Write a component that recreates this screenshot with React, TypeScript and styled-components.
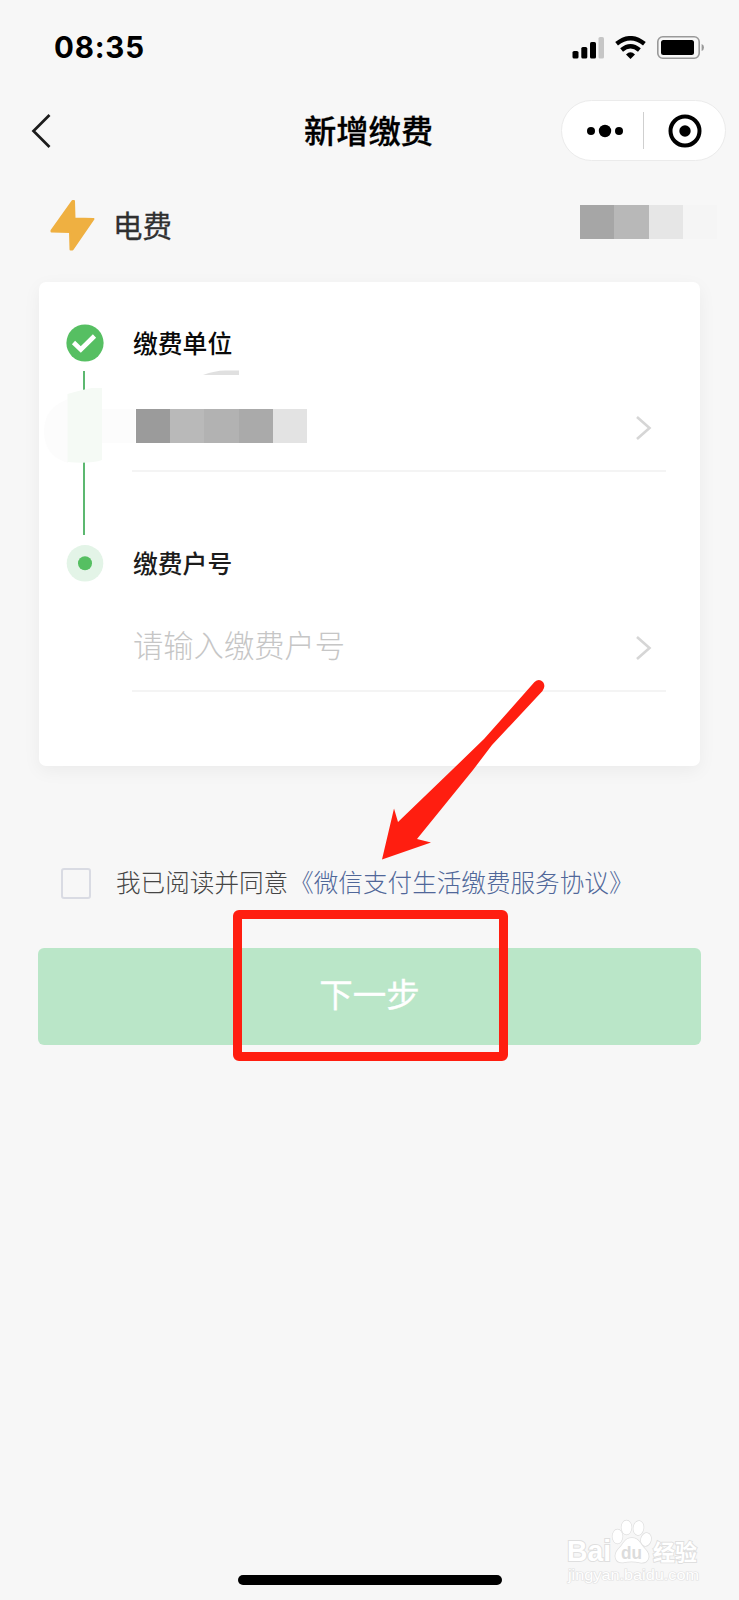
import React from 'react';
import styled, { createGlobalStyle } from 'styled-components';

const GlobalStyle = createGlobalStyle`
  * { box-sizing: border-box; }
  body { margin: 0; background: #f7f7f7; }
`;

const Screen = styled.main`
  position: relative;
  display: flex;
  flex-direction: column;
  width: 739px;
  height: 1600px;
  overflow: hidden;
  background: #f7f7f7;
  font-family: "Noto Sans CJK SC", "Noto Sans", sans-serif;
  color: #000;
`;

const StatusBar = styled.header`
  display: flex;
  align-items: center;
  justify-content: space-between;
  height: 94px;
  padding: 0 34px 0 53px;
`;

const Time = styled.span`
  font: 700 29.5px/40px Inter, sans-serif;
  letter-spacing: 0.8px;
  padding-left: 1px;
`;

const StatusIcons = styled.div`
  display: flex;
  align-items: center;
  gap: 11px;
`;

const NavBar = styled.nav`
  display: grid;
  grid-template-columns: 178px 1fr 178px;
  align-items: center;
  height: 73px;
  padding: 0 13px 0 12px;
`;

const BackButton = styled.button`
  display: flex;
  width: 60px;
  padding: 0 0 0 19px;
  border: 0;
  background: none;
`;

const PageTitle = styled.h1`
  margin: 0 1px 3px 0;
  text-align: center;
  font-size: 32.3px;
  line-height: 44px;
  font-weight: 500;
  -webkit-text-stroke: 0.3px #000;
`;

const Capsule = styled.div`
  display: flex;
  align-items: center;
  justify-self: end;
  width: 165px;
  height: 61px;
  border: 1px solid #ebebeb;
  border-radius: 31px;
  background: #fff;
`;

const CapsuleHalf = styled.span<{ $width: number; $inset: number }>`
  display: flex;
  width: ${({ $width }) => $width}px;
  padding-left: ${({ $inset }) => $inset}px;
`;

const CapsuleDivider = styled.span`
  width: 1px;
  height: 37px;
  background: #cfcfcf;
`;

const BillHeader = styled.section`
  display: flex;
  align-items: center;
  height: 115px;
  padding: 0 22px 0 50px;
`;

const BillName = styled.h2`
  flex: 1;
  margin: 0 0 2px 17px;
  color: #303030;
  font-size: 29.5px;
  line-height: 40px;
  font-weight: 400;
  -webkit-text-stroke: 0.3px #303030;
`;

const Mosaic = styled.div<{ $lift?: number; $inset?: number }>`
  display: flex;
  padding-left: ${({ $inset = 0 }) => $inset}px;
  margin-bottom: ${({ $lift = 0 }) => $lift}px;
`;

const Cell = styled.i<{ $tone: string }>`
  width: 34.2px;
  height: 34px;
  background: ${({ $tone }) => $tone};
`;

const Card = styled.section`
  position: relative;
  display: flex;
  flex-direction: column;
  height: 484px;
  margin: 0 39px;
  padding: 41px 34px 0 26px;
  border-radius: 7px;
  background: #fff;
  box-shadow: 0 5px 18px rgba(0, 0, 0, 0.05);
`;

const Step = styled.div`
  display: grid;
  grid-template-columns: 67px 1fr;
  height: 220px;
`;

const StepRail = styled.div`
  display: flex;
  flex-direction: column;
  align-items: flex-start;
  padding-top: 1px;
`;

const StepLine = styled.span`
  width: 2px;
  height: 164px;
  margin: 9px 0 0 18px;
  background: #5cb870;
`;

const StepBody = styled.div`
  display: flex;
  flex-direction: column;
`;

const StepTitle = styled.h3<{ $tone: string }>`
  margin: -1px 0 1px;
  padding-left: 1px;
  color: ${({ $tone }) => $tone};
  font-size: 24.8px;
  line-height: 40px;
  font-weight: 500;
`;

const Field = styled.div`
  display: flex;
  align-items: center;
  justify-content: space-between;
  height: 109px;
  padding: 22px 14px 0 1px;
  border-bottom: 2px solid #f4f4f4;
`;

const Placeholder = styled.span`
  color: #c6c6c6;
  font-size: 30.3px;
  line-height: 40px;
  font-weight: 300;
  margin-bottom: 8px;
`;

const RailSmudge = styled.svg`
  position: absolute;
  left: 4px;
  top: 88px;
`;

const TopSmudge = styled.svg`
  position: absolute;
  left: 164px;
  top: 88px;
`;

const Agreement = styled.label`
  display: flex;
  align-items: center;
  height: 40px;
  margin: 96px 0 0 61px;
  color: #454545;
  font-size: 24.6px;
  line-height: 40px;
  font-weight: 300;
  white-space: nowrap;
`;

const AgreementText = styled.span`
  padding-bottom: 2px;
`;

const CheckBox = styled.span`
  width: 30px;
  height: 31px;
  margin: 2px 25px 0 0;
  border: 2px solid #d9dbe3;
  border-radius: 3px;
`;

const AgreementLink = styled.a`
  padding-left: 1px;
  color: #506799;
`;

const NextButton = styled.button`
  height: 97px;
  margin: 46px 38px 0;
  padding: 0 0 7px;
  border: 0;
  border-radius: 6px;
  background: #bae6c8;
  color: #fff;
  font: 400 33.5px/44px "Noto Sans CJK SC", sans-serif;
  -webkit-text-stroke: 0.3px #fff;
`;

const HomeIndicator = styled.div`
  width: 264px;
  height: 10px;
  margin: auto auto 15px 238px;
  border-radius: 5px;
  background: #000;
`;

const Highlight = styled.div`
  position: absolute;
  left: 233px;
  top: 910px;
  width: 275px;
  height: 151px;
  border: 9px solid #ff1e10;
  border-radius: 6px;
`;

const Arrow = styled.svg`
  position: absolute;
  left: 374px;
  top: 672px;
`;

const Watermark = styled.svg`
  position: absolute;
  left: 559px;
  top: 1512px;
`;

const Chevron = () => (
  <svg width="17" height="26" viewBox="0 0 17 26" fill="none" stroke="#d6d6d6" strokeWidth="2.6">
    <path d="M2 2 L14.5 13 L2 24" />
  </svg>
);

export default function App() {
  return (
    <>
      <GlobalStyle />
      <Screen>
        <StatusBar>
          <Time>08:35</Time>
          <StatusIcons>
            <svg width="32" height="23" viewBox="0 0 32 23">
              <rect x="0.5" y="15" width="6" height="7.5" rx="1.6" />
              <rect x="9.3" y="11" width="6" height="11.5" rx="1.6" />
              <rect x="18" y="6" width="6" height="16.5" rx="1.6" />
              <rect x="26.5" y="1" width="5.5" height="21.5" rx="1.6" fill="#c6c6c6" />
            </svg>
            <svg width="31" height="23" viewBox="0 0 31 23" fill="none" stroke="#000" strokeWidth="4.4">
              <path d="M1.6 7.8 Q15.5 -3.4 29.4 7.8" />
              <path d="M6.6 14 Q15.5 6.6 24.4 14" />
              <path d="M11 18.5 Q15.5 14 20 18.5 L15.5 23 Z" fill="#000" stroke="none" />
            </svg>
            <svg width="48" height="23" viewBox="0 0 48 23">
              <rect x="0.8" y="0.8" width="41.4" height="21.4" rx="5" fill="none" stroke="#999" strokeWidth="1.6" />
              <rect x="4" y="4" width="33" height="15" rx="2.5" />
              <path d="M44.6 8 Q47 8.8 47 11.5 Q47 14.2 44.6 15 Z" fill="#999" />
            </svg>
          </StatusIcons>
        </StatusBar>

        <NavBar>
          <BackButton aria-label="返回">
            <svg width="22" height="36" viewBox="0 0 22 36" fill="none" stroke="#1c1c1c" strokeWidth="2.7">
              <path d="M18.5 2 L2.5 18 L18.5 34" />
            </svg>
          </BackButton>
          <PageTitle>新增缴费</PageTitle>
          <Capsule>
            <CapsuleHalf $width={81} $inset={24.7}>
              <svg width="36" height="14" viewBox="0 0 36 14">
                <circle cx="4" cy="7" r="4" />
                <circle cx="18" cy="7" r="6.2" />
                <circle cx="32" cy="7" r="4" />
              </svg>
            </CapsuleHalf>
            <CapsuleDivider />
            <CapsuleHalf $width={81} $inset={23.5}>
              <svg width="34" height="34" viewBox="0 0 34 34">
                <circle cx="17" cy="17" r="14.5" fill="none" stroke="#000" strokeWidth="4" />
                <circle cx="17" cy="17" r="5.7" />
              </svg>
            </CapsuleHalf>
          </Capsule>
        </NavBar>

        <BillHeader>
          <svg width="46" height="52" viewBox="0 0 46 52">
            <path
              d="M24 2 L24.5 19.5 L43.5 20 L22.5 50.5 L20.5 50.5 L20 33 L1.5 32.5 L1.5 31.5 L22.5 2 Z"
              fill="#efb041" stroke="#efb041" strokeWidth="2" strokeLinejoin="round"
            />
          </svg>
          <BillName>电费</BillName>
          <Mosaic $lift={6}>
            {['#a6a6a6', '#b8b8b8', '#e6e6e6', '#f5f5f5'].map((tone) => (
              <Cell key={tone} $tone={tone} />
            ))}
          </Mosaic>
        </BillHeader>

        <Card>
          <Step>
            <StepRail>
              <svg width="40" height="38" viewBox="0 0 40 38">
                <circle cx="20" cy="19" r="18.6" fill="#56bf62" />
                <path d="M8.5 18.5 L15.8 25.5 L29.5 12" fill="none" stroke="#fff" strokeWidth="4.6" />
              </svg>
              <StepLine />
            </StepRail>
            <StepBody>
              <StepTitle $tone="#0a0a0a">缴费单位</StepTitle>
              <Field>
                <Mosaic $lift={3} $inset={3}>
                  {['#9b9b9b', '#b9b9b9', '#b2b2b2', '#aaaaaa', '#e3e3e3'].map((tone) => (
                    <Cell key={tone} $tone={tone} />
                  ))}
                </Mosaic>
                <Chevron />
              </Field>
            </StepBody>
          </Step>
          <Step>
            <StepRail>
              <svg width="40" height="38" viewBox="0 0 40 38">
                <circle cx="20" cy="19.3" r="18.3" fill="#e3f4e7" />
                <circle cx="20" cy="19.3" r="7" fill="#56bf62" />
              </svg>
            </StepRail>
            <StepBody>
              <StepTitle $tone="#1c1c1c">缴费户号</StepTitle>
              <Field>
                <Placeholder>请输入缴费户号</Placeholder>
                <Chevron />
              </Field>
            </StepBody>
          </Step>
          <RailSmudge width="94" height="94" viewBox="0 0 94 94">
            <path d="M25 29 Q1 38 1 61 Q1 86 25 93 Z" fill="#fcfcfc" />
            <path d="M58 39 H92 V73 H58 Z" fill="#fcfcfc" />
            <path d="M24.5 24 Q42 19 49 18 H59 V90 Q48 94 24.5 92 Z" fill="#f5faf5" />
          </RailSmudge>
          <TopSmudge width="37" height="6" viewBox="0 0 37 6">
            <path d="M0 5 Q12 0.5 22 0.5 H36 V5 Z" fill="#e0e0e0" />
          </TopSmudge>
        </Card>

        <Agreement>
          <CheckBox />
          <AgreementText>
            我已阅读并同意<AgreementLink>《微信支付生活缴费服务协议》</AgreementLink>
          </AgreementText>
        </Agreement>

        <NextButton>下一步</NextButton>
        <HomeIndicator />

        <Highlight />
        <Arrow width="176" height="192" viewBox="374 672 176 192">
          <path
            d="M534.5 682 Q539 678 543 682 Q546 686 542.5 691 L492 745 L473 770 L417 839 L431 842.5 L382 859.5 L394 808.5 L398 822 L452 770 L484 739 Z"
            fill="#ff1e10"
          />
        </Arrow>
        <Watermark width="150" height="78" viewBox="0 0 150 78" fill="#fff" stroke="#dfdfdf" strokeWidth="1.4" paintOrder="stroke">
          <text x="8" y="49" fontFamily="Liberation Sans, sans-serif" fontWeight="700" fontSize="29" textLength="44" lengthAdjust="spacingAndGlyphs" strokeWidth="2">Bai</text>
          <ellipse cx="58.5" cy="24.5" rx="5" ry="7" />
          <ellipse cx="67.5" cy="15.5" rx="5" ry="7" />
          <ellipse cx="79.5" cy="16" rx="5" ry="7" transform="rotate(8 79.5 16)" />
          <ellipse cx="87" cy="27.5" rx="5" ry="6.5" transform="rotate(15 87 27.5)" />
          <path d="M73 26 C80 26 81 32 86 37 C93 44 89 52 81 50.5 C75 49 70 49 64 50.5 C56 51 54 43 59.5 37 C65 32 65 26 73 26 Z" />
          <text x="62" y="47" fontFamily="Liberation Sans, sans-serif" fontWeight="700" fontSize="18.5" fill="#dcdcdc" stroke="none" textLength="21" lengthAdjust="spacingAndGlyphs">du</text>
          <text x="94" y="47.5" fontFamily="Noto Sans CJK SC, sans-serif" fontWeight="700" fontSize="22" strokeWidth="1.8">经验</text>
          <text x="9" y="68" fontFamily="Liberation Sans, sans-serif" fontSize="14" textLength="131" lengthAdjust="spacingAndGlyphs" strokeWidth="1.2" stroke="#e2e2e2">jingyan.baidu.com</text>
        </Watermark>
      </Screen>
    </>
  );
}
